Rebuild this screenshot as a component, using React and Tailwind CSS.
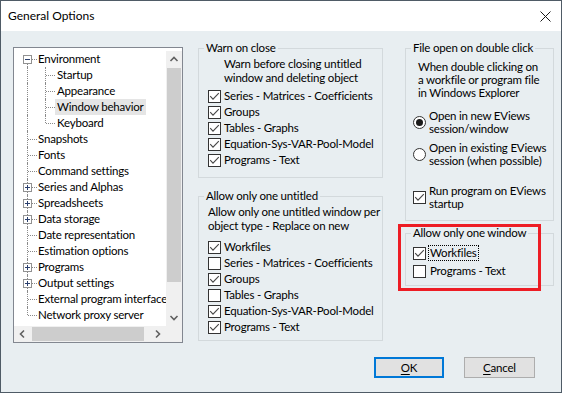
import React from "react";

const FONT = "font-['Lato','Noto_Sans',sans-serif]";

function Check({ checked }) {
  return (
    <span className="w-[13px] h-[13px] border border-[#333333] bg-white flex items-center justify-center shrink-0">
      {checked && (
        <svg width="11" height="11" viewBox="0 0 11 11">
          <path d="M1.2 5.2 L4 8.2 L9.8 2.2" fill="none" stroke="#474747" strokeWidth="1.1" />
        </svg>
      )}
    </span>
  );
}

function Radio({ checked }) {
  return (
    <span className="w-[13px] h-[13px] rounded-full border border-[#333333] bg-white flex items-center justify-center shrink-0">
      {checked && <span className="w-[7px] h-[7px] rounded-full bg-[#1a1a1a]" />}
    </span>
  );
}

function CheckRow({ checked, label }) {
  return (
    <div className="flex items-center h-[16px] gap-[3px] whitespace-nowrap">
      <Check checked={checked} />
      <span className="leading-[16px]">{label}</span>
    </div>
  );
}

function Legend({ children }) {
  return <legend className="ml-[5px] px-[2px] leading-[16px] whitespace-nowrap">{children}</legend>;
}

function Chevron({ dir }) {
  const d = {
    up: "M1.5 6 L5 2.5 L8.5 6",
    down: "M1.5 3 L5 6.5 L8.5 3",
    left: "M6 1.5 L2.5 5 L6 8.5",
    right: "M3 1.5 L6.5 5 L3 8.5",
  }[dir];
  return (
    <svg width="10" height="10" viewBox="0 0 10 10">
      <path d={d} fill="none" stroke="#606060" strokeWidth="1.6" />
    </svg>
  );
}

const TREE = [
  { label: "Environment", box: "minus", first: true },
  { label: "Startup", child: true },
  { label: "Appearance", child: true },
  { label: "Window behavior", child: true, selected: true },
  { label: "Keyboard", child: true, lastChild: true },
  { label: "Snapshots" },
  { label: "Fonts" },
  { label: "Command settings" },
  { label: "Series and Alphas", box: "plus" },
  { label: "Spreadsheets", box: "plus" },
  { label: "Data storage", box: "plus" },
  { label: "Date representation" },
  { label: "Estimation options" },
  { label: "Programs", box: "plus" },
  { label: "Output settings", box: "plus" },
  { label: "External program interface" },
  { label: "Network proxy server", last: true },
];

function TreeRow({ item }) {
  return (
    <div className="flex h-[16px] items-center">
      <div className="relative w-[24px] h-full shrink-0">
        <span
          className={`absolute left-[13px] w-0 border-l border-dotted border-[#8a8a8a] ${
            item.first ? "top-[8px]" : "top-0"
          } ${item.last ? "bottom-[8px]" : "bottom-0"}`}
        />
        {!item.child && (
          <span className="absolute left-[14px] top-[8px] w-[9px] h-0 border-t border-dotted border-[#8a8a8a]" />
        )}
        {item.box && (
          <span className="absolute left-[9px] top-[4px] w-[9px] h-[9px] border border-[#919191] bg-white flex items-center justify-center">
            <span className="relative w-[5px] h-[5px] flex items-center justify-center">
              <span className="absolute w-[5px] h-[1px] bg-[#2a3f6e]" />
              {item.box === "plus" && <span className="absolute w-[1px] h-[5px] bg-[#2a3f6e]" />}
            </span>
          </span>
        )}
      </div>
      {item.child && (
        <div className="relative w-[19px] h-full shrink-0">
          <span
            className={`absolute left-[7px] top-0 w-0 border-l border-dotted border-[#8a8a8a] ${
              item.lastChild ? "bottom-[8px]" : "bottom-0"
            }`}
          />
          <span className="absolute left-[8px] top-[8px] w-[9px] h-0 border-t border-dotted border-[#8a8a8a]" />
        </div>
      )}
      <span
        className={`-ml-[2px] px-[2px] leading-[16px] whitespace-nowrap ${
          item.selected ? "bg-[#e5e5e5]" : ""
        }`}
      >
        {item.label}
      </span>
    </div>
  );
}

function Tree() {
  return (
    <div className="mt-[7px] w-[170px] h-[296px] shrink-0 border border-[#828790] bg-white grid grid-cols-[1fr_16px] grid-rows-[1fr_16px]">
      <div className="overflow-hidden pt-[3px]">
        {TREE.map((it) => (
          <TreeRow key={it.label} item={it} />
        ))}
      </div>
      <div className="pt-[3px] flex flex-col">
        <div className="flex-1 bg-[#f0f0f0] flex flex-col">
          <div className="h-[17px] flex items-center justify-center">
            <Chevron dir="up" />
          </div>
          <div className="h-[214px] mx-[1px] bg-[#cdcdcd]" />
          <div className="flex-1" />
          <div className="h-[17px] flex items-center justify-center">
            <Chevron dir="down" />
          </div>
        </div>
      </div>
      <div className="bg-[#f0f0f0] flex">
        <div className="w-[17px] flex items-center justify-center">
          <Chevron dir="left" />
        </div>
        <div className="ml-[1px] w-[112px] my-[1px] bg-[#cdcdcd]" />
        <div className="flex-1" />
        <div className="w-[17px] flex items-center justify-center">
          <Chevron dir="right" />
        </div>
      </div>
      <div className="bg-[#f0f0f0]" />
    </div>
  );
}

export default function App() {
  return (
    <div
      className={`w-[562px] h-[393px] border border-[#4f5b66] flex flex-col text-[11.5px] tracking-[-0.2px] text-black overflow-hidden whitespace-nowrap ${FONT}`}
    >
      <div className="h-[30px] shrink-0 bg-white flex items-center pl-[7px] pr-[10px] text-[12px] tracking-normal">
        <span className="flex-1">General Options</span>
        <svg width="11" height="11" viewBox="0 0 11 11">
          <path d="M0.5 0.5 L10.5 10.5 M10.5 0.5 L0.5 10.5" stroke="#1a1a1a" strokeWidth="1" />
        </svg>
      </div>

      <div className="flex-1 relative bg-[#e8eef1] flex flex-col pl-[12px] pt-[9px]">
        <div className="flex items-start">
          <Tree />

          <div className="ml-[15px] w-[185px] shrink-0 flex flex-col gap-[10px]">
            <fieldset className="border border-[#d3d9dc] h-[138px] p-0 m-0">
              <Legend>Warn on close</Legend>
              <div className="pl-[9px] pt-[1px]">
                <div className="pl-[16px] leading-[14px]">
                  Warn before closing untitled
                  <br />
                  window and deleting object
                </div>
                <div className="mt-[3px] flex flex-col">
                  <CheckRow checked label="Series - Matrices - Coefficients" />
                  <CheckRow checked label="Groups" />
                  <CheckRow checked label="Tables - Graphs" />
                  <CheckRow checked label="Equation-Sys-VAR-Pool-Model" />
                  <CheckRow checked label="Programs - Text" />
                </div>
              </div>
            </fieldset>

            <fieldset className="border border-[#d3d9dc] h-[153px] p-0 m-0">
              <Legend>Allow only one untitled</Legend>
              <div className="pl-[9px] pt-[1px]">
                <div className="leading-[14px]">
                  Allow only one untitled window per
                  <br />
                  object type - Replace on new
                </div>
                <div className="mt-[6px] flex flex-col">
                  <CheckRow checked label="Workfiles" />
                  <CheckRow label="Series - Matrices - Coefficients" />
                  <CheckRow checked label="Groups" />
                  <CheckRow label="Tables - Graphs" />
                  <CheckRow checked label="Equation-Sys-VAR-Pool-Model" />
                  <CheckRow checked label="Programs - Text" />
                </div>
              </div>
            </fieldset>
          </div>

          <div className="ml-[22px] w-[149px] shrink-0 flex flex-col gap-[4px]">
            <fieldset className="border border-[#d3d9dc] h-[181px] p-0 m-0">
              <Legend>File open on double click</Legend>
              <div className="pl-[7px] pt-[4px]">
                <div className="ml-[5px] leading-[13px]">
                  When double clicking on
                  <br />
                  a workfile or program file
                  <br />
                  in Windows Explorer
                </div>
                <div className="mt-[10px] flex items-center gap-[3px]">
                  <Radio checked />
                  <span className="leading-[13px]">
                    Open in new EViews
                    <br />
                    session/window
                  </span>
                </div>
                <div className="mt-[6px] flex items-center gap-[3px]">
                  <Radio />
                  <span className="leading-[13px]">
                    Open in existing EViews
                    <br />
                    session (when possible)
                  </span>
                </div>
                <div className="mt-[17px] flex items-center gap-[3px]">
                  <Check checked />
                  <span className="leading-[13px]">
                    Run program on EViews
                    <br />
                    startup
                  </span>
                </div>
              </div>
            </fieldset>

            <fieldset className="border border-[#d3d9dc] h-[61px] p-0 m-0">
              <Legend>Allow only one window</Legend>
              <div className="pl-[7px] pt-[4px] flex flex-col gap-[2px]">
                <div className="flex items-center h-[16px] gap-[2px]">
                  <Check checked />
                  <span className="px-[1px] leading-[14px] border border-dotted border-black">Workfiles</span>
                </div>
                <div className="flex items-center h-[16px] gap-[2px]">
                  <Check />
                  <span className="px-[1px] leading-[14px] border border-transparent">Programs - Text</span>
                </div>
              </div>
            </fieldset>
          </div>
        </div>

        <div className="mt-[14px] flex justify-end gap-[20px] pr-[26px]">
          <button className="w-[70px] h-[21px] border-2 border-[#0078d7] bg-[#e1e1e1] flex items-center justify-center leading-none">
            <span>
              <span className="underline underline-offset-2">O</span>K
            </span>
          </button>
          <button className="w-[71px] h-[21px] border border-[#adadad] bg-[#e1e1e1] flex items-center justify-center leading-none">
            <span>
              <span className="underline underline-offset-2">C</span>ancel
            </span>
          </button>
        </div>

        <div className="absolute left-[397px] top-[193px] w-[143px] h-[67px] border-[3px] border-[#ed1c24] pointer-events-none" />
      </div>
    </div>
  );
}
